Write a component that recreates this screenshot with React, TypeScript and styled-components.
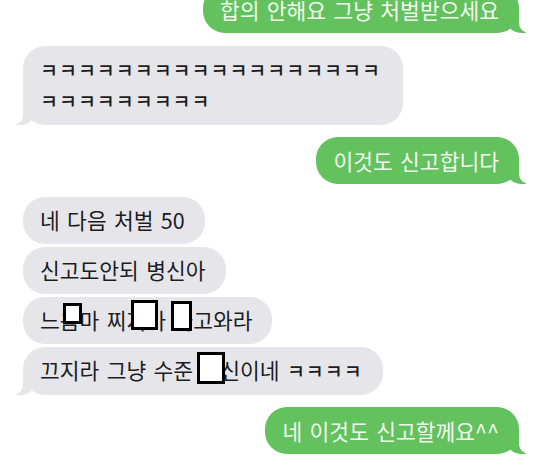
import React from "react";
import styled, { createGlobalStyle, css } from "styled-components";

type Side = "in" | "out";

const GREEN = "#63c15e";
const GRAY = "#e6e6ea";

const GlobalStyle = createGlobalStyle`
    html, body {
        margin: 0;
        padding: 0;
        background: #fff;
    }
    body {
        font-family: "Noto Sans CJK KR", "Noto Sans", sans-serif;
        overflow: hidden;
    }
`;

const Thread = styled.main`
    display: flex;
    flex-direction: column;
    gap: 12.5px;
    padding: 0 19px 0 23px;
    margin-top: -14px;
`;

const Group = styled.div<{ $side: Side }>`
    display: flex;
    flex-direction: column;
    gap: 3px;
    align-items: ${(p) => (p.$side === "out" ? "flex-end" : "flex-start")};
`;

const tail = (side: Side) => {
    const color = side === "out" ? GREEN : GRAY;
    const edge = side === "out" ? "right" : "left";
    const corner = side === "out" ? "border-bottom-left-radius" : "border-bottom-right-radius";
    return css`
        &::before {
            content: "";
            position: absolute;
            bottom: 0;
            ${edge}: -7px;
            width: 20px;
            height: 22px;
            background: ${color};
            ${corner}: 16px 14px;
        }
        &::after {
            content: "";
            position: absolute;
            bottom: 0;
            ${edge}: -10px;
            width: 10px;
            height: 22px;
            background: #fff;
            ${corner}: 10px;
        }
    `;
};

const Bubble = styled.div<{ $side: Side; $tail?: boolean }>`
    position: relative;
    box-sizing: border-box;
    max-width: 380px;
    padding: 8.5px 20px 8.5px 17px;
    border-radius: 22px;
    font-size: 21.5px;
    line-height: 30px;
    word-spacing: 2.5px;
    word-break: break-all;
    background: ${(p) => (p.$side === "out" ? GREEN : GRAY)};
    color: ${(p) => (p.$side === "out" ? "#f3fbf0" : "#1d1d1f")};
    ${(p) => p.$tail && tail(p.$side)}
`;

const Laugh = styled.span`
    font-size: 19.5px;
    font-weight: 500;
    letter-spacing: 1px;
    word-spacing: 0;
`;

const Censor = styled.span<{ $x: number; $y: number; $w: number; $h: number }>`
    position: relative;
    &::after {
        content: "";
        position: absolute;
        left: ${(p) => p.$x}px;
        top: ${(p) => p.$y}px;
        width: ${(p) => p.$w}px;
        height: ${(p) => p.$h}px;
        box-sizing: border-box;
        background: #fff;
        border: 3px solid #000;
    }
`;

const App = () => {
    return (
        <>
            <GlobalStyle />
            <Thread>
                <Group $side="out">
                    <Bubble $side="out" $tail>
                        합의 안해요 그냥 처벌받으세요
                    </Bubble>
                </Group>
                <Group $side="in">
                    <Bubble $side="in" $tail>
                        <Laugh>ㅋㅋㅋㅋㅋㅋㅋㅋㅋㅋㅋㅋㅋㅋㅋㅋㅋㅋㅋㅋㅋㅋㅋㅋㅋㅋㅋ</Laugh>
                    </Bubble>
                </Group>
                <Group $side="out">
                    <Bubble $side="out" $tail>
                        이것도 신고합니다
                    </Bubble>
                </Group>
                <Group $side="in">
                    <Bubble $side="in">네 다음 처벌 50</Bubble>
                    <Bubble $side="in">신고도안되 병신아</Bubble>
                    <Bubble $side="in">
                        느<Censor $x={3} $y={-1} $w={19} $h={21}>음</Censor>마 찌
                        <Censor $x={4.5} $y={-4} $w={27} $h={30}>지</Censor>가{" "}
                        <Censor $x={-2} $y={-3} $w={21} $h={30}>가</Censor>고와라
                    </Bubble>
                    <Bubble $side="in" $tail>
                        끄지라 그냥 수준 <Censor $x={-3.5} $y={-2} $w={28} $h={32}>병</Censor>신이네{" "}
                        <Laugh>ㅋㅋㅋㅋ</Laugh>
                    </Bubble>
                </Group>
                <Group $side="out">
                    <Bubble $side="out" $tail>
                        네 이것도 신고할께요^^
                    </Bubble>
                </Group>
            </Thread>
        </>
    );
};

export default App;
